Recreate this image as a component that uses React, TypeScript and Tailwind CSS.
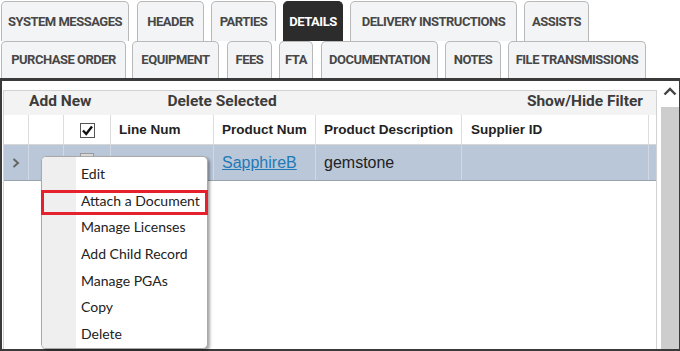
import React from "react";

type Tab = { label: string; cls: string; active?: boolean };

const row1: Tab[] = [
  { label: "SYSTEM MESSAGES", cls: "w-[128px] ml-[1px]" },
  { label: "HEADER", cls: "w-[67px] ml-[8px]" },
  { label: "PARTIES", cls: "w-[65px] ml-[7px]" },
  { label: "DETAILS", cls: "w-[60px] ml-[7px]", active: true },
  { label: "DELIVERY INSTRUCTIONS", cls: "w-[167px] ml-[7px]" },
  { label: "ASSISTS", cls: "w-[65px] ml-[7px]" },
];

const row2: Tab[] = [
  { label: "PURCHASE ORDER", cls: "w-[125px] ml-[1px]" },
  { label: "EQUIPMENT", cls: "w-[87px] ml-[6px]" },
  { label: "FEES", cls: "w-[45px] ml-[8px]" },
  { label: "FTA", cls: "w-[34px] ml-[7px]" },
  { label: "DOCUMENTATION", cls: "w-[117px] ml-[8px]" },
  { label: "NOTES", cls: "w-[56px] ml-[7px]" },
  { label: "FILE TRANSMISSIONS", cls: "w-[138px] ml-[7px]" },
];

function TabItem({ t }: { t: Tab }) {
  const base =
    "h-full shrink-0 rounded-t-[5px] border border-b-0 flex items-center justify-center text-[13px] font-bold tracking-[-0.5px] " +
    t.cls;
  const color = t.active
    ? " bg-[#2c2c2c] border-[#2c2c2c] text-white"
    : " bg-[#f3f4f6] border-[#b9b9b9] text-[#474747]";
  return (
    <div className={base + color} style={{ fontFamily: "Roboto, sans-serif" }}>
      {t.label}
    </div>
  );
}

const menuItems = [
  "Edit",
  "Attach a Document",
  "Manage Licenses",
  "Add Child Record",
  "Manage PGAs",
  "Copy",
  "Delete",
];

function Check({ checked }: { checked?: boolean }) {
  return (
    <div className="w-[15px] h-[15px] border border-[#555] bg-white flex items-center justify-center">
      {checked && (
        <svg width="13" height="13" viewBox="0 0 13 13">
          <path d="M2 6.5 L5.2 10 L11 2.5" fill="none" stroke="#111" strokeWidth="2.4" />
        </svg>
      )}
    </div>
  );
}

export default function App() {
  const arial = { fontFamily: '"Liberation Sans", Arial, sans-serif' };
  const roboto = { fontFamily: "Roboto, sans-serif" };
  return (
    <div className="w-[680px] h-[351px] bg-white relative overflow-hidden">
      {/* Tabs */}
      <div className="h-[78px] pt-px flex flex-col">
        <div className="flex h-[40px]">
          {row1.map((t) => (
            <TabItem key={t.label} t={t} />
          ))}
        </div>
        <div className="flex h-[37px]">
          {row2.map((t) => (
            <TabItem key={t.label} t={t} />
          ))}
        </div>
      </div>

      {/* Content frame */}
      <div className="h-[273px] border-t-[3px] border-l-2 border-r border-b-2 border-[#3a3a3a] flex">
        {/* Grid */}
        <div className="w-[655px] pt-[9px] flex flex-col">
          <div className="ml-px flex-1 border-l border-r border-t border-[#d2d2d2] flex flex-col">
            {/* toolbar */}
            <div
              className="h-[24px] bg-[#f3f3f3] flex items-center text-[15.5px] font-bold text-[#3c3c3c] pb-[2px]"
              style={roboto}
            >
              <span className="ml-[25px]">Add New</span>
              <span className="ml-[76px]">Delete Selected</span>
              <span className="ml-auto mr-[13px]">Show/Hide Filter</span>
            </div>
            {/* header */}
            <div
              className="h-[30px] flex border-b border-[#d6d6d6] text-[13.5px] font-bold text-[#222] bg-white"
              style={arial}
            >
              <div className="w-[25px] border-r border-[#dcdcdc]" />
              <div className="w-[35px] border-r border-[#dcdcdc]" />
              <div className="w-[47px] border-r border-[#dcdcdc] flex items-center justify-center pt-[2px]">
                <Check checked />
              </div>
              <div className="w-[103px] border-r border-[#dcdcdc] flex items-center pl-[8px] pt-[2px]">Line Num</div>
              <div className="w-[102px] border-r border-[#dcdcdc] flex items-center pl-[8px] pt-[2px]">Product Num</div>
              <div className="w-[146px] border-r border-[#dcdcdc] flex items-center pl-[8px] pt-[2px]">Product Description</div>
              <div className="w-[187px] border-r border-[#dcdcdc] flex items-center pl-[9px] pt-[2px]">Supplier ID</div>
              <div className="flex-1" />
            </div>
            {/* data row */}
            <div
              className="h-[36px] flex border-b border-[#9aa3ad] bg-[#b9c7d9] text-[16px] text-[#222]"
              style={arial}
            >
              <div className="w-[25px] border-r border-[#cfd8e3] flex items-center justify-center">
                <svg width="8" height="10" viewBox="0 0 8 10">
                  <path d="M1.5 1 L6 5 L1.5 9" fill="none" stroke="#666" strokeWidth="2" />
                </svg>
              </div>
              <div className="w-[35px] border-r border-[#cfd8e3]" />
              <div className="w-[47px] border-r border-[#cfd8e3] flex justify-center pt-[8px]">
                <div className="w-[14px] h-[14px] border border-[#9a9a9a] bg-[#d8d8d8]" />
              </div>
              <div className="w-[103px] border-r border-[#cfd8e3]" />
              <div className="w-[102px] border-r border-[#cfd8e3] flex items-center pl-[8px]">
                <span className="text-[#2379b5] underline">SapphireB</span>
              </div>
              <div className="w-[146px] border-r border-[#cfd8e3] flex items-center pl-[8px]">
                gemstone
              </div>
              <div className="w-[187px] border-r border-[#cfd8e3]" />
              <div className="flex-1" />
            </div>
            <div className="flex-1 bg-white" />
          </div>
        </div>
        {/* Scrollbar */}
        <div className="flex-1 flex flex-col">
          <div className="h-[26px] flex justify-center pt-[6px] pl-[4px]">
            <svg width="14" height="9" viewBox="0 0 14 9">
              <path d="M1.5 7.5 L7 2 L12.5 7.5" fill="none" stroke="#444" strokeWidth="2.4" />
            </svg>
          </div>
          <div className="flex-1 ml-[4px] bg-[#cdcdcd]" />
        </div>
      </div>

      {/* Context menu */}
      <div
        className="absolute left-[41px] top-[156px] w-[167px] h-[193px] bg-white border border-[#a9a9a9] rounded-[5px] shadow-[2px_2px_3px_rgba(0,0,0,0.35)] overflow-hidden"
        style={{ fontFamily: "Lato, sans-serif" }}
      >
        <div className="absolute left-0 top-0 bottom-0 w-[34px] bg-[#efefef]" />
        <div className="relative pt-[3px] flex flex-col">
          {menuItems.map((m) => (
            <div key={m} className="h-[26.7px] flex items-center pl-[39px] text-[14px] text-[#222]">
              {m}
            </div>
          ))}
        </div>
      </div>
      {/* Red highlight */}
      <div className="absolute left-[41px] top-[190px] w-[167px] h-[25px] border-[3px] border-[#e5212d]" />
    </div>
  );
}
